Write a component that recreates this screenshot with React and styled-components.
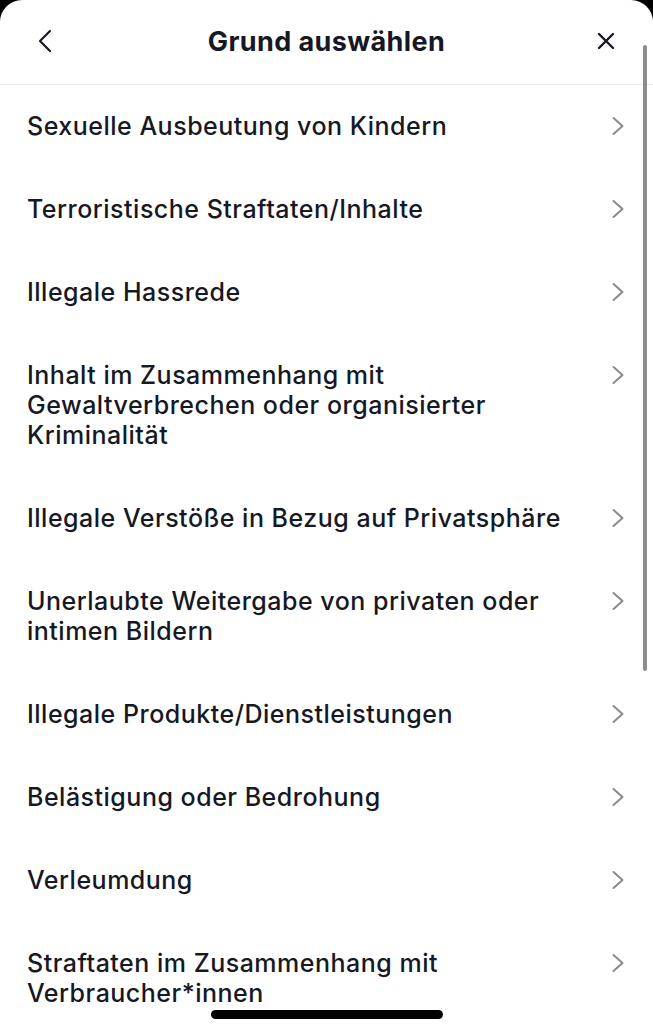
import React from "react";
import styled, { createGlobalStyle } from "styled-components";

const GlobalStyle = createGlobalStyle`
  html, body {
    margin: 0;
    padding: 0;
    background: #000;
  }
  body {
    font-family: Inter, "Liberation Sans", sans-serif;
    -webkit-font-smoothing: antialiased;
  }
`;

const reasons = [
  "Sexuelle Ausbeutung von Kindern",
  "Terroristische Straftaten/Inhalte",
  "Illegale Hassrede",
  "Inhalt im Zusammenhang mit Gewaltverbrechen oder organisierter Kriminalität",
  "Illegale Verstöße in Bezug auf Privatsphäre",
  "Unerlaubte Weitergabe von privaten oder intimen Bildern",
  "Illegale Produkte/Dienstleistungen",
  "Belästigung oder Bedrohung",
  "Verleumdung",
  "Straftaten im Zusammenhang mit Verbraucher*innen",
];

const BackIcon = () => (
  <svg width="16" height="24" viewBox="0 0 16 24" fill="none">
    <path d="M13 2 L3 12 L13 22" stroke="#161823" strokeWidth="2.2" strokeLinecap="round" strokeLinejoin="round" />
  </svg>
);

const CloseIcon = () => (
  <svg width="18" height="18" viewBox="0 0 18 18" fill="none">
    <path d="M2 2 L16 16 M16 2 L2 16" stroke="#161823" strokeWidth="2.4" strokeLinecap="round" />
  </svg>
);

const ChevronIcon = () => (
  <svg width="12" height="20" viewBox="0 0 12 20" fill="none">
    <path d="M1.5 2 L10.5 10 L1.5 18" stroke="#8a8b91" strokeWidth="2" strokeLinecap="round" strokeLinejoin="round" />
  </svg>
);

export default function App() {
  return (
    <>
      <GlobalStyle />
      <Sheet>
        <Header>
          <IconButton>
            <BackIcon />
          </IconButton>
          <Title>Grund auswählen</Title>
          <IconButton>
            <CloseIcon />
          </IconButton>
        </Header>
        <List>
          {reasons.map((r) => (
            <Row key={r}>
              <RowText>{r}</RowText>
              <ChevronWrap>
                <ChevronIcon />
              </ChevronWrap>
            </Row>
          ))}
        </List>
        <ScrollThumb />
        <HomeIndicator />
      </Sheet>
    </>
  );
}

const Sheet = styled.div`
  position: relative;
  width: 653px;
  height: 1024px;
  background: #fff;
  border-radius: 22px 22px 0 0;
  overflow: hidden;
  color: #161823;
`;

const Header = styled.div`
  height: 85px;
  display: grid;
  grid-template-columns: 80px 1fr 80px;
  align-items: center;
  border-bottom: 1px solid #ededee;
  box-sizing: border-box;
  padding: 0 0 2px;
`;

const IconButton = styled.div`
  display: flex;
  align-items: center;
  justify-content: center;
  &:first-child {
    justify-content: flex-start;
    padding-left: 37px;
  }
  &:last-child {
    justify-content: flex-end;
    padding-right: 38px;
  }
`;

const Title = styled.h1`
  margin: 0;
  text-align: center;
  font-size: 27px;
  font-weight: 700;
  letter-spacing: 0.4px;
`;

const List = styled.div`
  display: flex;
  flex-direction: column;
`;

const Row = styled.div`
  display: flex;
  align-items: flex-start;
  justify-content: space-between;
  padding: 26px 29px 27px 27px;
`;

const RowText = styled.div`
  font-size: 25px;
  font-weight: 500;
  line-height: 30px;
  letter-spacing: 0.5px;
  max-width: 560px;
`;

const ChevronWrap = styled.div`
  height: 30px;
  display: flex;
  align-items: center;
`;

const ScrollThumb = styled.div`
  position: absolute;
  right: 6px;
  top: 45px;
  width: 4px;
  height: 626px;
  border-radius: 2px;
  background: #8c8c8c;
`;

const HomeIndicator = styled.div`
  position: absolute;
  left: 211px;
  bottom: 5px;
  width: 232px;
  height: 9px;
  border-radius: 5px;
  background: #000;
`;
